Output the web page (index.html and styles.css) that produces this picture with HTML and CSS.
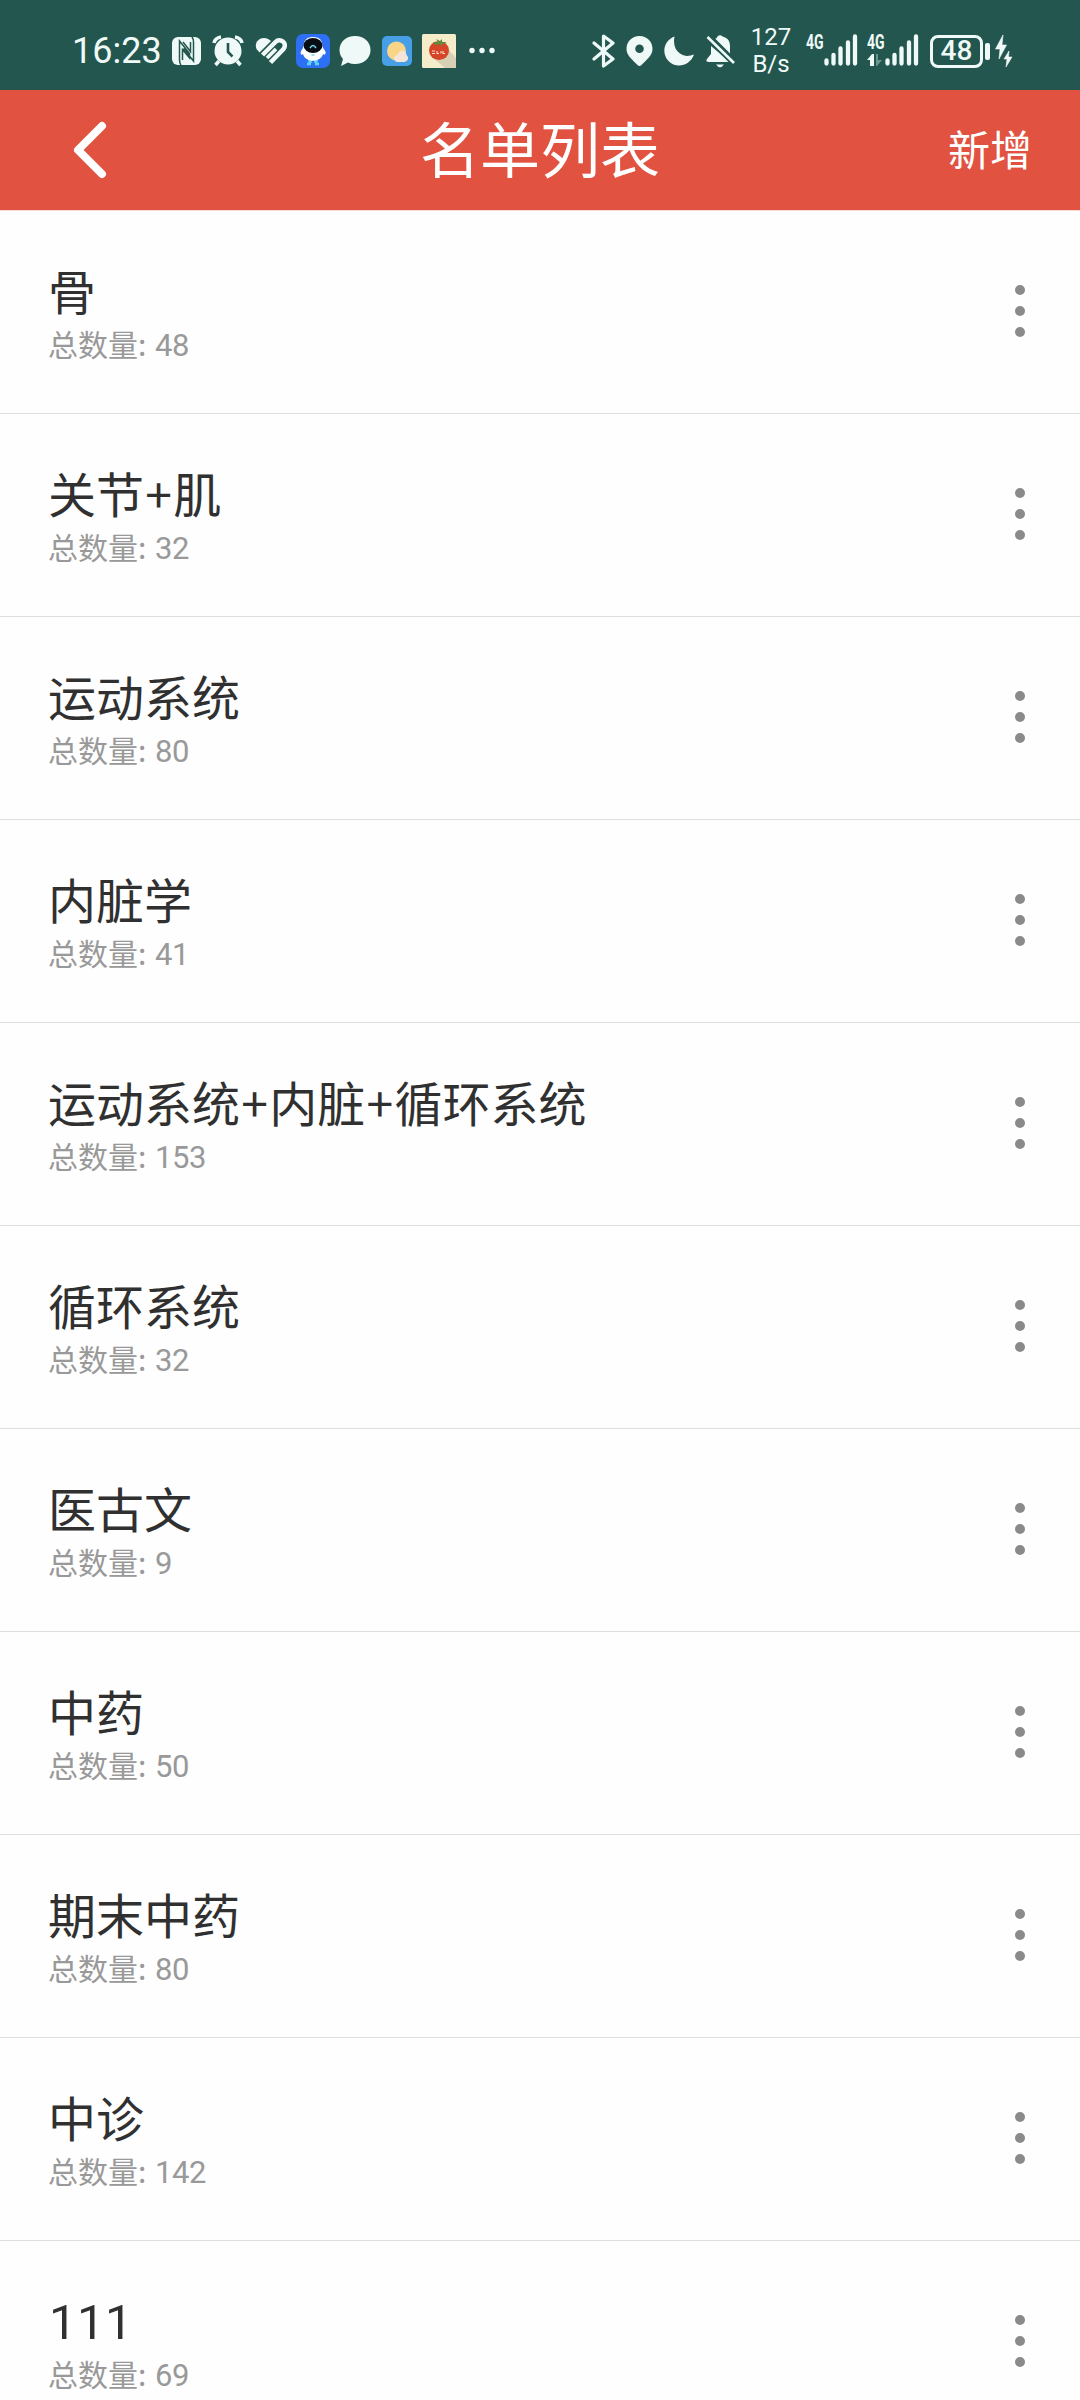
FILE: index.html
```html
<!DOCTYPE html>
<html lang="zh-CN">
<head>
<meta charset="utf-8">
<title>名单列表</title>
<link rel="stylesheet" href="styles.css">
</head>
<body>
<div class="status">
  <span class="clock">16:23</span>
  <svg class="nfc" width="29" height="40" viewBox="0 0 29 40"><rect y="6" width="29" height="28" rx="6" fill="#effaf8"/><path d="M9 34Q7.500 32 7.500 29V10L17.500 22.500V27L10.500 18.500V29M20 6Q21.500 8 21.500 11V30L11.500 17.500M18.500 11V20.500L11 11" fill="none" stroke="#23564e" stroke-width="1.500"/></svg>
  <svg class="alarm" width="32" height="40" viewBox="0 0 32 40"><circle cx="16" cy="20" r="13.500" fill="#effaf8"/><path d="M2 12Q3 7 9 6M23 6Q29 7 30 12M7 30L3.500 34M25 30L28.500 34" fill="none" stroke="#effaf8" stroke-width="3.500"/><path d="M16 12V21L20.500 25.500" fill="none" stroke="#23564e" stroke-width="2.600"/></svg>
  <svg class="health" width="32" height="40" viewBox="0 0 32 40"><path d="M1.500 18C-2 9 9 3 16 10L4.500 21.500Z" fill="#effaf8"/><g fill="none" stroke="#effaf8"><path d="M7.500 24L20.500 11C25 6.500 33 12 28.500 18L15.500 31.500" stroke-width="4.500"/><path d="M12 27L21 18" stroke-width="3.700"/></g></svg>
  <svg class="robot" width="34" height="40" viewBox="0 0 34 40"><rect y="3" width="34" height="34" rx="7" fill="#2e70f5"/><path d="M14 29V32M20 29V32" stroke="#5ed4ee" stroke-width="3.500"/><path d="M11 33H15M19 33H23" stroke="#5ed4ee" stroke-width="2.500"/><path d="M17 6C8 6 8 12 7 17C3 22 5 25 7 23C9 32 25 32 27 23C30 25 31 21 27 17C26 11 26 6 17 6Z" fill="#fff"/><ellipse cx="17" cy="14.500" rx="9.500" ry="7.500" fill="#080d13"/><path d="M14 17Q17 12 20 17M15.500 24H18.500" fill="none" stroke="#6fd6e7" stroke-width="1.500"/></svg>
  <svg class="bubble" width="32" height="40" viewBox="0 0 32 40"><path d="M16 5C25 5 31.500 11 31.500 19S25 33 16 33Q12 33 9 31.500L2 35L4 28Q.500 24 .500 19C.500 11 7 5 16 5Z" fill="#effaf8"/></svg>
  <svg class="weather" width="30" height="40" viewBox="0 0 30 40"><rect y="5" width="30" height="30" rx="5" fill="#479fe6"/><circle cx="14.500" cy="20" r="9.500" fill="#fad585"/><path d="M15 31C10 29 12 24 15.500 24C17 18 24 18 24.500 24C28 27 25 31 22 31Z" fill="#f5e5d8"/></svg>
  <svg class="tomato" width="34" height="40" viewBox="0 0 34 40"><rect y="3" width="34" height="34" rx="1.500" fill="#f5edc9"/><path d="M26 18L34 27V37H23L11 27Z" fill="#d7d0b4"/><ellipse cx="17" cy="19.500" rx="10" ry="9.500" fill="#d64529"/><path d="M11 11L16 11L14 8L18 10L20 8L20 11L25 11L21 13L19 15L17 13L13 14Z" fill="#618b3c"/><path d="M10 20H13M10 22.500H13M15 20V22.500H17M19 20V22.500M21 20V22.500H23" fill="none" stroke="#f7dfc8" stroke-width="1.100"/></svg>
  <svg class="more" width="26" height="40" viewBox="0 0 26 40"><g fill="#effaf8"><circle cx="3" cy="19.500" r="2.700"/><circle cx="13" cy="19.500" r="2.700"/><circle cx="23" cy="19.500" r="2.700"/></g></svg>
  <svg class="bluetooth" width="24" height="40" viewBox="0 0 24 40"><path d="M2 12L21 28L11.500 35V5L21 12L2 28" fill="none" stroke="#effaf8" stroke-width="3.200" stroke-linejoin="round" stroke-linecap="round"/></svg>
  <svg class="pin" width="27" height="40" viewBox="0 0 27 40"><path fill-rule="evenodd" d="M13.500 5C21 5 26.500 10.500 26.500 18C26.500 25 20 29 15.500 34Q13.500 36 11.500 34C7 29 .500 25 .500 18C.500 10.500 6 5 13.500 5ZM13.500 13.500A4.300 4.300 0 1 0 13.500 22.100A4.300 4.300 0 1 0 13.500 13.500Z" fill="#effaf8"/></svg>
  <svg class="moon" width="31" height="40" viewBox="0 0 31 40"><path d="M10.500 5.500C9 13 11 19 16 22.500C20 25.500 25 25.500 30 23.500C26 35 12 38 4.500 30C-3 22 0 9.500 10.500 5.500Z" fill="#effaf8"/></svg>
  <svg class="bell" width="31" height="40" viewBox="0 0 31 40"><path d="M6 15V23L2 28Q0 31 4 31H25ZM10 8Q12 7 12.500 5.500Q15 3 17.500 5.500C22 7 25 9 25 15V23L26 24ZM11 33.500H19Q15 39 11 33.500Z" fill="#effaf8"/><path d="M3 5.500L29.500 32" stroke="#23564e" stroke-width="7"/><path d="M2.500 6L29 32" stroke="#effaf8" stroke-width="2.600"/></svg>
  <div class="speed"><span>127</span><span>B/s</span></div>
  <div class="signal">
    <div class="network"><span class="tag">4G</span></div>
    <svg width="34" height="40" viewBox="0 0 34 40"><path d="M2.500 29.500V32.500M9.500 24V32.500M16.500 17.500V32.500M24 11.500V32.500M31 5.500V32.500" stroke="#effaf8" stroke-width="4.300" stroke-linecap="round"/></svg>
  </div>
  <div class="signal second">
    <div class="network"><span class="tag">4G</span><svg width="16" height="12" viewBox="0 0 16 12"><path d="M3 12V6H0L5 0H7V12Z" fill="#effaf8"/><path d="M9 0H11V6H15L10 12H9Z" fill="#66958c"/></svg></div>
    <svg width="34" height="40" viewBox="0 0 34 40"><path d="M2.500 29.500V32.500M9.500 24V32.500M16.500 17.500V32.500M24 11.500V32.500M31 5.500V32.500" stroke="#effaf8" stroke-width="4.300" stroke-linecap="round"/></svg>
  </div>
  <div class="battery">48</div>
  <i class="terminal"></i>
  <svg class="bolt" width="18" height="40" viewBox="0 0 18 40"><path d="M8 4L.500 18H5L4 28L11.500 14H7ZM14 20L9 28H12L11 36L17 26H13.500Z" fill="#effaf8" stroke="#effaf8" stroke-width=".6"/></svg>
</div>
<header class="bar">
  <svg class="back" width="40" height="64" viewBox="0 0 40 64"><path d="M32 8L8 32L32 56" fill="none" stroke="#fff" stroke-width="8" stroke-linecap="round" stroke-linejoin="round"/></svg>
  <h1>名单列表</h1>
  <span class="add">新增</span>
</header>
<ul class="list">
  <li><div><h2>骨</h2><p>总数量: <b>48</b></p></div><span class="menu"><i></i><i></i><i></i></span></li>
  <li><div><h2>关节<span class="plus">+</span>肌</h2><p>总数量: <b>32</b></p></div><span class="menu"><i></i><i></i><i></i></span></li>
  <li><div><h2>运动系统</h2><p>总数量: <b>80</b></p></div><span class="menu"><i></i><i></i><i></i></span></li>
  <li><div><h2>内脏学</h2><p>总数量: <b>41</b></p></div><span class="menu"><i></i><i></i><i></i></span></li>
  <li><div><h2>运动系统<span class="plus">+</span>内脏<span class="plus">+</span>循环系统</h2><p>总数量: <b>153</b></p></div><span class="menu"><i></i><i></i><i></i></span></li>
  <li><div><h2>循环系统</h2><p>总数量: <b>32</b></p></div><span class="menu"><i></i><i></i><i></i></span></li>
  <li><div><h2>医古文</h2><p>总数量: <b>9</b></p></div><span class="menu"><i></i><i></i><i></i></span></li>
  <li><div><h2>中药</h2><p>总数量: <b>50</b></p></div><span class="menu"><i></i><i></i><i></i></span></li>
  <li><div><h2>期末中药</h2><p>总数量: <b>80</b></p></div><span class="menu"><i></i><i></i><i></i></span></li>
  <li><div><h2>中诊</h2><p>总数量: <b>142</b></p></div><span class="menu"><i></i><i></i><i></i></span></li>
  <li><div><h2 class="digits">111</h2><p>总数量: <b>69</b></p></div><span class="menu"><i></i><i></i><i></i></span></li>
</ul>
</body>
</html>
```
FILE: styles.css
```css
* { box-sizing: border-box; margin: 0; padding: 0; }
body { width: 1080px; height: 2400px; overflow: hidden; background: #fefefe; font-family: "Noto Sans CJK SC", sans-serif; }
svg { display: block; flex: none; }

.status { display: flex; align-items: center; height: 90px; padding: 12px 0 0 72px; background: #23564e; color: #effaf8; font-family: Roboto, sans-serif; }
.clock { width: 90px; font-size: 36px; line-height: 40px; white-space: nowrap; }
.nfc { margin-left: 10px; }
.alarm { margin-left: 11px; }
.health { margin-left: 11px; }
.robot { margin-left: 9px; }
.bubble { margin-left: 9px; }
.weather { margin-left: 11px; }
.tomato { margin-left: 10px; }
.more { margin-left: 13px; }
.bluetooth { margin-left: 97px; }
.pin { margin-left: 10px; }
.moon { margin-left: 11px; }
.bell { margin-left: 10px; }
.speed { display: flex; flex-direction: column; align-items: center; width: 42px; margin-left: 14px; font-size: 24px; line-height: 27px; }
.signal { display: flex; height: 40px; margin-left: 14px; }
.signal.second { margin-left: 9px; }
.network { width: 18px; padding-top: 3px; }
.tag { display: block; height: 20px; font: 700 20px/16px Roboto, sans-serif; transform: scaleX(.7); transform-origin: left; }
.battery { width: 53px; height: 33px; margin-left: 11px; border: 3px solid #effaf8; border-radius: 8px; font-size: 28px; font-weight: 500; line-height: 26px; text-align: center; }
.terminal { width: 5px; height: 17px; margin-left: 2px; border-radius: 2px; background: #effaf8; }
.bolt { margin-left: 5px; }

.bar { display: grid; grid-template-columns: 1fr auto 1fr; align-items: center; height: 121px; padding: 0 48px 0 70px; border-bottom: 1px solid #fbd9d3; background: #e15241; color: #fff; }
.bar h1 { margin-right: 22px; padding-bottom: 6px; font-size: 60px; font-weight: 400; line-height: 88px; }
.add { justify-self: end; padding-bottom: 5px; font-size: 42px; line-height: 60px; }

.list { list-style: none; }
.list li { display: flex; justify-content: space-between; height: 203px; padding: 47px 55px 0 48px; border-bottom: 1px solid #dcdfde; }
.list h2 { height: 65px; color: #303030; font-size: 48px; font-weight: 400; line-height: 62px; }
.list h2.digits { padding: 4px 0 0 1px; font-family: Roboto, sans-serif; font-size: 49px; letter-spacing: .4px; }
.list .plus { margin: 0 1.3px; }
.list p { color: #999; font-size: 30px; line-height: 40px; }
.list b { margin-left: 2px; font: 400 31px/30px Roboto, sans-serif; letter-spacing: -.4px; }
.menu { display: flex; flex-direction: column; gap: 11px; padding-top: 27px; }
.menu i { width: 10px; height: 10px; border-radius: 50%; background: #8a8a8a; }
```
